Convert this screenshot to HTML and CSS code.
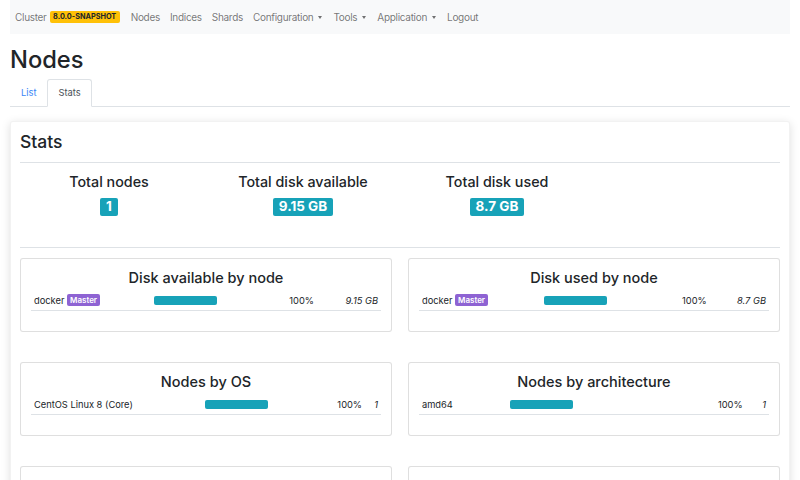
FILE: index.html
```html
<!DOCTYPE html>
<html>
<head>
<meta charset="utf-8">
<link rel="stylesheet" href="styles.css">
</head>
<body>
<div class="page">
  <nav class="navbar">
    <span class="brand">Cluster <span class="badge badge-warning">8.0.0-SNAPSHOT</span></span>
    <a class="nav-item">Nodes</a>
    <a class="nav-item">Indices</a>
    <a class="nav-item">Shards</a>
    <a class="nav-item dropdown">Configuration</a>
    <a class="nav-item dropdown">Tools</a>
    <a class="nav-item dropdown">Application</a>
    <a class="nav-item">Logout</a>
  </nav>

  <h1 class="title">Nodes</h1>

  <ul class="tabs">
    <li class="tab">List</li>
    <li class="tab active">Stats</li>
  </ul>

  <div class="card main-card">
    <h2 class="card-title">Stats</h2>
    <div class="totals-wrap">
      <div class="totals">
        <div class="total">
          <div class="total-label">Total nodes</div>
          <span class="badge badge-info">1</span>
        </div>
        <div class="total">
          <div class="total-label">Total disk available</div>
          <span class="badge badge-info">9.15 GB</span>
        </div>
        <div class="total">
          <div class="total-label">Total disk used</div>
          <span class="badge badge-info">8.7 GB</span>
        </div>
        <div class="total"></div>
      </div>
    </div>

    <div class="charts">
      <div class="card chart">
        <h3 class="chart-title">Disk available by node</h3>
        <table class="tbl">
          <tr>
            <td class="name">docker <span class="badge badge-master">Master</span></td>
            <td class="barcell"><div class="bar"></div></td>
            <td class="pct">100%</td>
            <td class="val">9.15 GB</td>
          </tr>
        </table>
      </div>
      <div class="card chart">
        <h3 class="chart-title">Disk used by node</h3>
        <table class="tbl">
          <tr>
            <td class="name">docker <span class="badge badge-master">Master</span></td>
            <td class="barcell"><div class="bar"></div></td>
            <td class="pct">100%</td>
            <td class="val">8.7 GB</td>
          </tr>
        </table>
      </div>
      <div class="card chart">
        <h3 class="chart-title">Nodes by OS</h3>
        <table class="tbl">
          <tr>
            <td class="name">CentOS Linux 8 (Core)</td>
            <td class="barcell"><div class="bar"></div></td>
            <td class="pct">100%</td>
            <td class="val">1</td>
          </tr>
        </table>
      </div>
      <div class="card chart">
        <h3 class="chart-title">Nodes by architecture</h3>
        <table class="tbl">
          <tr>
            <td class="name">amd64</td>
            <td class="barcell"><div class="bar"></div></td>
            <td class="pct">100%</td>
            <td class="val">1</td>
          </tr>
        </table>
      </div>
      <div class="card chart"></div>
      <div class="card chart"></div>
    </div>
  </div>
</div>
</body>
</html>
```

FILE: styles.css
```css
* { box-sizing: border-box; }
html, body { margin: 0; padding: 0; background: #fff; }
body {
  font-family: Inter, "Liberation Sans", sans-serif;
  color: #212529;
  font-size: 9.3px;
  overflow: hidden;
  height: 480px;
}
.page { padding: 0 10px; }

.navbar {
  display: flex;
  align-items: center;
  background: #f8f9fa;
  height: 34px;
  padding: 0 5px;
  font-size: 10px;
  letter-spacing: -0.3px;
}
.brand { color: rgba(0,0,0,.55); margin-right: 6px; display: flex; align-items: center; gap: 3px; }
.nav-item { color: rgba(0,0,0,.55); padding: 0 5px; }
.dropdown::after {
  content: "";
  display: inline-block;
  margin-left: 5px;
  vertical-align: 2px;
  border-top: 3.5px solid rgba(0,0,0,.55);
  border-left: 2.8px solid transparent;
  border-right: 2.8px solid transparent;
}
.nav-item.dropdown { margin-right: 1px; }

.badge {
  display: inline-block;
  font-weight: 700;
  border-radius: 2px;
  line-height: 1;
  white-space: nowrap;
  letter-spacing: 0;
}
.badge-warning {
  background: #ffc107;
  color: #212529;
  font-size: 7.3px;
  padding: 2.5px 3.5px;
}
.badge-info {
  background: #17a2b8;
  color: #fff;
  font-size: 13.5px;
  padding: 2px 6px;
}
.badge-master {
  background: #8e63d3;
  color: #fff;
  font-size: 8px;
  padding: 2px 3px;
  font-weight: 600;
  vertical-align: 1px;
}

.title {
  font-size: 23.7px;
  font-weight: 500;
  margin: 11px 0 4px;
  line-height: 30px;
}

.tabs {
  list-style: none;
  margin: 0;
  padding: 0;
  display: flex;
  border-bottom: 1px solid #dee2e6;
}
.tab {
  padding: 6px 10px 7px;
  line-height: 13px;
  color: #3a86f7;
  border: 1px solid transparent;
  border-top-left-radius: 3px;
  border-top-right-radius: 3px;
  margin-bottom: -1px;
}
.tab.active {
  color: #495057;
  border-color: #dee2e6 #dee2e6 #fff;
  background: #fff;
}

.card {
  border: 1px solid rgba(0,0,0,.125);
  border-radius: 3px;
  background: #fff;
}
.main-card {
  margin-top: 14px;
  padding: 8px 9px 0;
  border-color: rgba(0,0,0,.05);
  box-shadow: 0 2px 10px rgba(0,0,0,.13);
}
.card-title {
  font-size: 17.5px;
  font-weight: 500;
  margin: 0;
  line-height: 24px;
  padding-bottom: 8px;
  border-bottom: 1px solid #dee2e6;
}

.totals-wrap {
  border-bottom: 1px solid #dee2e6;
  padding: 9px 0 31px;
}
.totals {
  display: grid;
  grid-template-columns: repeat(4, 1fr);
  margin: 0 -8px;
}
.total { text-align: center; }
.total-label {
  font-size: 14.3px;
  font-weight: 500;
  line-height: 20px;
  margin-bottom: 6px;
}

.charts {
  display: grid;
  grid-template-columns: 1fr 1fr;
  column-gap: 16px;
  row-gap: 30px;
  padding-top: 10px;
}
.chart {
  height: 74px;
  padding: 9px 10px 0;
}
.chart-title {
  font-size: 14.5px;
  font-weight: 500;
  text-align: center;
  margin: 0 0 3px;
  line-height: 20px;
}
.tbl {
  width: 100%;
  border-collapse: collapse;
  font-size: 9.3px;
}
.tbl td {
  padding: 3px 3px 3px;
  border-bottom: 1px solid #dee2e6;
  line-height: 13px;
  white-space: nowrap;
}
.bar {
  width: 63px;
  height: 9px;
  background: #17a2b8;
  border-radius: 2px;
}
.pct { text-align: right; }
.val { text-align: right; font-style: italic; }
```
